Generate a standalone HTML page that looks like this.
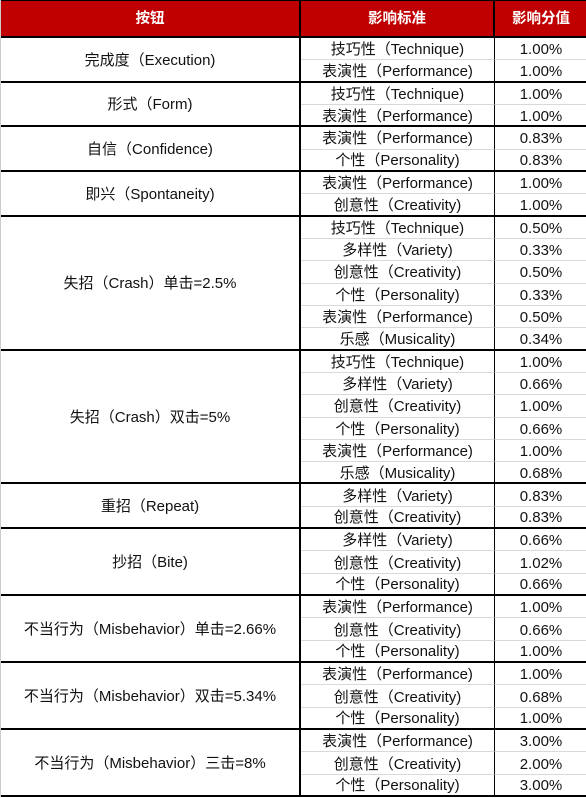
<!DOCTYPE html><html><head><meta charset="utf-8"><style>
body{margin:0;background:#fff;width:586px;height:798px;overflow:hidden}
.g{display:grid;grid-template-columns:300px 194px 92px;grid-template-rows:38px repeat(34,minmax(0,1fr));height:797px;font-family:"Liberation Sans","Noto Sans CJK SC",sans-serif;font-size:15px;line-height:1;color:#111;border-left:1px solid #ccc;box-sizing:border-box}
.g>div{display:flex;align-items:center;justify-content:center;box-sizing:border-box;border-bottom:1px solid #d9d9d9;white-space:nowrap;overflow:hidden;min-height:0;padding-top:2px}
.h{background:#c00000;color:#fff;font-weight:bold;font-size:14.5px;border-bottom:2px solid #000!important;border-top:1px solid #000}
.a{border-right:2px solid #000;border-bottom:2px solid #000!important}
.b{border-right:1px solid #000}
.e{border-bottom:2px solid #000!important}
</style></head><body><div class="g">
<div class="h a">按钮</div><div class="h b" style="border-right:2px solid #000">影响标准</div><div class="h">影响分值</div>
<div class="a" style="grid-row:span 2">完成度（Execution)</div><div class="b">技巧性（Technique)</div><div>1.00%</div><div class="b e">表演性（Performance)</div><div class="e">1.00%</div>
<div class="a" style="grid-row:span 2">形式（Form)</div><div class="b">技巧性（Technique)</div><div>1.00%</div><div class="b e">表演性（Performance)</div><div class="e">1.00%</div>
<div class="a" style="grid-row:span 2">自信（Confidence)</div><div class="b">表演性（Performance)</div><div>0.83%</div><div class="b e">个性（Personality)</div><div class="e">0.83%</div>
<div class="a" style="grid-row:span 2">即兴（Spontaneity)</div><div class="b">表演性（Performance)</div><div>1.00%</div><div class="b e">创意性（Creativity)</div><div class="e">1.00%</div>
<div class="a" style="grid-row:span 6">失招（Crash）单击=2.5%</div><div class="b">技巧性（Technique)</div><div>0.50%</div><div class="b">多样性（Variety)</div><div>0.33%</div><div class="b">创意性（Creativity)</div><div>0.50%</div><div class="b">个性（Personality)</div><div>0.33%</div><div class="b">表演性（Performance)</div><div>0.50%</div><div class="b e">乐感（Musicality)</div><div class="e">0.34%</div>
<div class="a" style="grid-row:span 6">失招（Crash）双击=5%</div><div class="b">技巧性（Technique)</div><div>1.00%</div><div class="b">多样性（Variety)</div><div>0.66%</div><div class="b">创意性（Creativity)</div><div>1.00%</div><div class="b">个性（Personality)</div><div>0.66%</div><div class="b">表演性（Performance)</div><div>1.00%</div><div class="b e">乐感（Musicality)</div><div class="e">0.68%</div>
<div class="a" style="grid-row:span 2">重招（Repeat)</div><div class="b">多样性（Variety)</div><div>0.83%</div><div class="b e">创意性（Creativity)</div><div class="e">0.83%</div>
<div class="a" style="grid-row:span 3">抄招（Bite)</div><div class="b">多样性（Variety)</div><div>0.66%</div><div class="b">创意性（Creativity)</div><div>1.02%</div><div class="b e">个性（Personality)</div><div class="e">0.66%</div>
<div class="a" style="grid-row:span 3">不当行为（Misbehavior）单击=2.66%</div><div class="b">表演性（Performance)</div><div>1.00%</div><div class="b">创意性（Creativity)</div><div>0.66%</div><div class="b e">个性（Personality)</div><div class="e">1.00%</div>
<div class="a" style="grid-row:span 3">不当行为（Misbehavior）双击=5.34%</div><div class="b">表演性（Performance)</div><div>1.00%</div><div class="b">创意性（Creativity)</div><div>0.68%</div><div class="b e">个性（Personality)</div><div class="e">1.00%</div>
<div class="a" style="grid-row:span 3">不当行为（Misbehavior）三击=8%</div><div class="b">表演性（Performance)</div><div>3.00%</div><div class="b">创意性（Creativity)</div><div>2.00%</div><div class="b e">个性（Personality)</div><div class="e">3.00%</div>
</div></body></html>
